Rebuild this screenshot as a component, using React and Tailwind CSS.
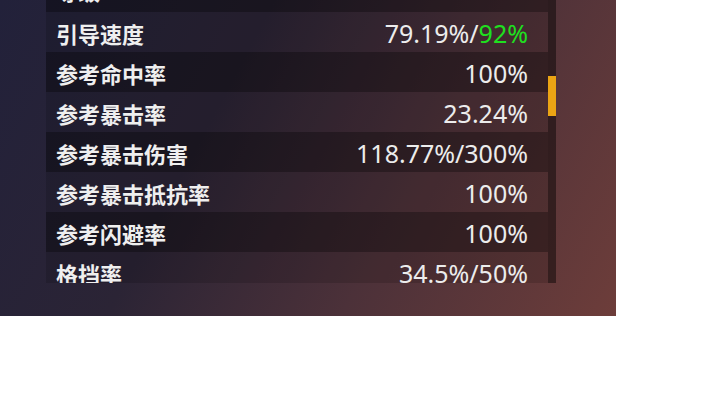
import React from "react";

const rows = [
  { label: "等级", value: "" },
  { label: "引导速度", value: "79.19%/", green: "92%" },
  { label: "参考命中率", value: "100%" },
  { label: "参考暴击率", value: "23.24%" },
  { label: "参考暴击伤害", value: "118.77%/300%" },
  { label: "参考暴击抵抗率", value: "100%" },
  { label: "参考闪避率", value: "100%" },
  { label: "格挡率", value: "34.5%/50%" },
];

export default function App() {
  return (
    <div className="w-[720px] h-[404px] bg-white">
      <div className="w-[616px] h-[316px] bg-[linear-gradient(118deg,#22213a_0%,#2b2435_35%,#4c3139_65%,#6d3d3a_100%)] flex">
        <div className="ml-[46px] w-[510px] h-[283px] overflow-hidden flex">
          <div className="w-[502px] flex flex-col -mt-[28px]">
            {rows.map((r, i) => (
              <div
                key={i}
                className={
                  "h-[40px] shrink-0 flex items-center justify-between pl-[10px] pr-[20px] pt-[2px] " +
                  (i % 2 === 0 ? "bg-[rgba(0,0,0,0.4)]" : "bg-[rgba(0,0,0,0.14)]")
                }
              >
                <span
                  className={
                    "text-[22px] font-bold text-[#efefef] leading-none font-['Noto_Sans_CJK_SC','Noto_Sans',sans-serif] " +
                    (i === 0 ? "-mt-[6px]" : "")
                  }
                >
                  {r.label}
                </span>
                <span className="text-[25px] text-[#ececec] leading-none font-['Noto_Sans','Noto_Sans_CJK_SC',sans-serif]">
                  {r.value}
                  {r.green && <span className="text-[#1fe01f]">{r.green}</span>}
                </span>
              </div>
            ))}
          </div>
          <div className="w-[8px] h-full bg-[rgba(0,0,0,0.45)] flex flex-col">
            <div className="mt-[76px] h-[40px] w-full bg-[#eba414]" />
          </div>
        </div>
      </div>
    </div>
  );
}
